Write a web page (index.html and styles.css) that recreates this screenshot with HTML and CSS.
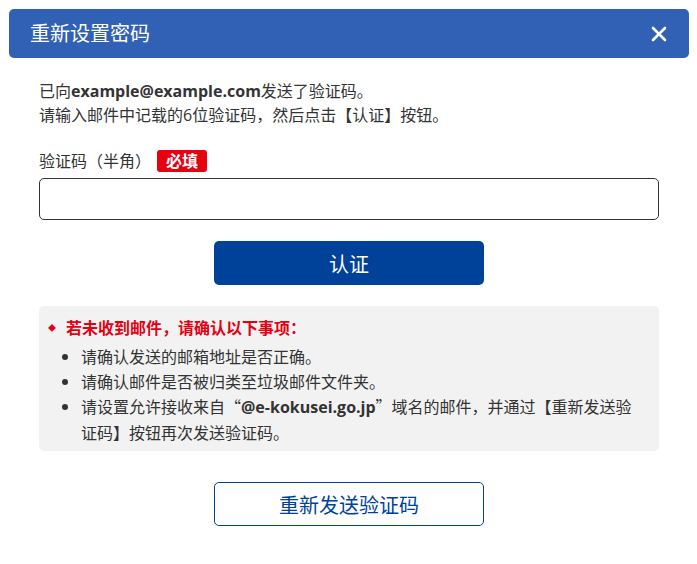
FILE: index.html
```html
<!DOCTYPE html>
<html>
    <head>
        <meta charset="utf-8">
        <link rel="stylesheet" href="styles.css">
    </head>

    <body>
        <div class="modal">
            <div class="modal-header">
                <span class="modal-title">重新设置密码</span>
                <button class="close" aria-label="关闭">
                    <svg width="16" height="16" viewBox="0 0 16 16">
                        <path d="M2 2 L14 14 M14 2 L2 14" stroke="#fff" stroke-width="2.6" stroke-linecap="round"/>
                    </svg>
                </button>
            </div>

            <div class="modal-body">
                <p class="intro">
                    已向<b>example@example.com</b>发送了验证码。<br>
                    请输入邮件中记载的6位验证码，然后点击【认证】按钮。
                </p>

                <div class="field-label">
                    验证码（半角）<span class="required">必填</span>
                </div>
                <input type="text" class="code-input">

                <div class="actions">
                    <button class="btn-primary">认证</button>
                </div>

                <div class="notice">
                    <div class="notice-title"><span class="diamond">◆</span>若未收到邮件，请确认以下事项：</div>
                    <ul class="notice-list">
                        <li>请确认发送的邮箱地址是否正确。</li>
                        <li>请确认邮件是否被归类至垃圾邮件文件夹。</li>
                        <li>请设置允许接收来自“<b class="latin">@e-kokusei.go.jp</b>”域名的邮件，并通过【重新发送验证码】按钮再次发送验证码。</li>
                    </ul>
                </div>

                <div class="actions resend">
                    <button class="btn-outline">重新发送验证码</button>
                </div>
            </div>
        </div>
    </body>
</html>
```

FILE: styles.css
```css
body {
    margin: 0;
    background: #fff;
    color: #333;
    font-family: "Open Sans", "Noto Sans CJK SC", sans-serif;
    font-size: 16px;
}

.modal {
    padding: 9px 8px 0 9px;
}

.modal-header {
    display: flex;
    align-items: center;
    justify-content: space-between;
    height: 49px;
    padding: 0 22px 0 21px;
    background: #3061b5;
    border-radius: 5px;
}

.modal-title {
    color: #fff;
    font-size: 20px;
    line-height: 24px;
}

.close {
    display: flex;
    padding: 0;
    background: none;
    border: 0;
}

.modal-body {
    padding: 0 30px;
}

.intro {
    margin: 21px 0 0;
    line-height: 24px;
}

.intro b {
    font-weight: 700;
}

.field-label {
    display: flex;
    align-items: center;
    margin-top: 22px;
    line-height: 24px;
}

.required {
    margin-left: 6px;
    padding: 0 9px;
    height: 22px;
    line-height: 22px;
    background: #e50012;
    color: #fff;
    font-weight: 700;
    border-radius: 3px;
}

.code-input {
    display: block;
    box-sizing: border-box;
    width: 100%;
    height: 42px;
    margin-top: 5px;
    border: 1px solid #333;
    border-radius: 5px;
    font-size: 16px;
    padding: 0 10px;
}

.actions {
    display: flex;
    justify-content: center;
    margin-top: 21px;
}

.actions button {
    width: 270px;
    height: 44px;
    font-family: inherit;
    font-size: 20px;
    border-radius: 5px;
    cursor: pointer;
}

.btn-primary {
    background: #00419a;
    color: #fff;
    border: 0;
}

.btn-outline {
    background: #fff;
    color: #00419a;
    border: 1px solid #00419a;
}

.notice {
    margin-top: 21px;
    padding: 10px 14px 6px 9px;
    background: #f2f2f2;
    border-radius: 5px;
}

.notice-title {
    display: flex;
    align-items: center;
    color: #e50012;
    font-weight: 700;
    line-height: 24px;
}

.diamond {
    font-size: 8px;
    width: 18px;
}

.notice-list {
    margin: 4px 0 0;
    padding-left: 33px;
    line-height: 25px;
    font-family: "Noto Sans CJK SC", sans-serif;
}

.notice-list .latin {
    font-family: "Open Sans", sans-serif;
    font-weight: 700;
}

.resend {
    margin-top: 31px;
}
```
